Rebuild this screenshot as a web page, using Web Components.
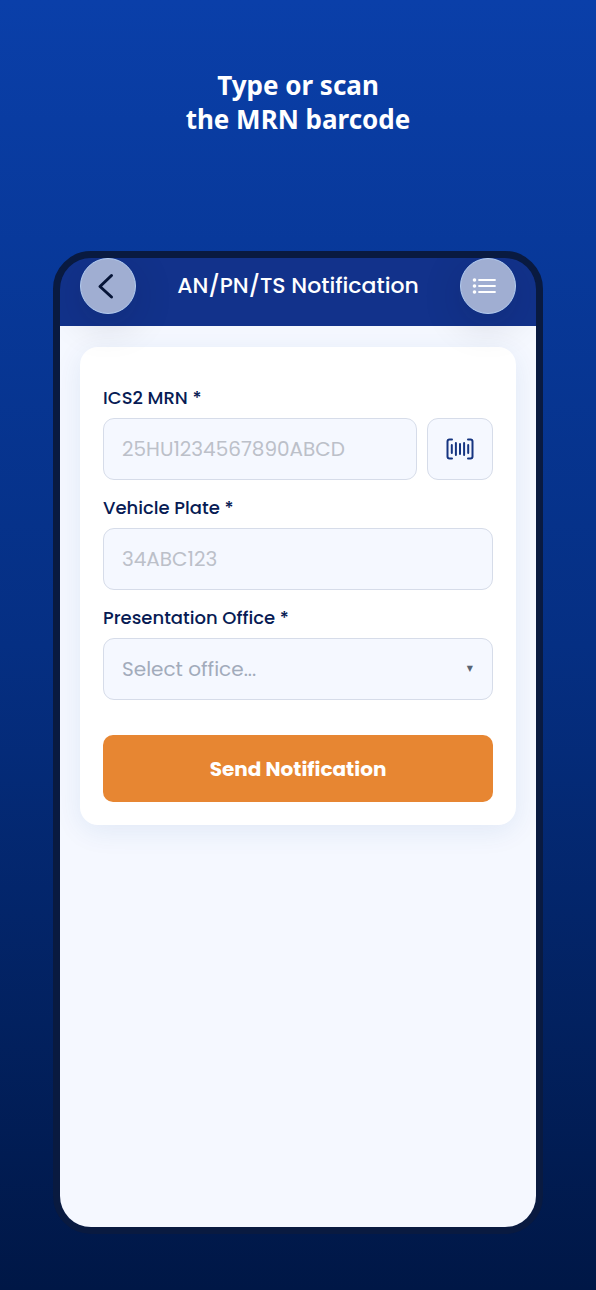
<!DOCTYPE html>
<html lang="en">
<head>
<meta charset="utf-8">
<meta name="viewport" content="width=device-width, initial-scale=1">
<title>AN/PN/TS Notification</title>
<style>
  body{
    margin:0;
    font-family:Poppins, Inter, "Liberation Sans", sans-serif;
    color:#071b54;
  }
</style>
</head>
<body>
  <promo-page>
    <span slot="title">Type or scan<br>the MRN barcode</span>
    <phone-frame>
      <app-header slot="header">
        <round-button slot="start" label="Back">
          <svg width="56" height="56" viewBox="0 0 56 56" fill="none" stroke="#061436" stroke-width="3" stroke-linecap="round" stroke-linejoin="round"><path d="M31.500 17.500 20 28.500 31.500 39"/></svg>
        </round-button>
        AN/PN/TS Notification
        <round-button slot="end" label="Menu">
          <svg width="56" height="56" viewBox="0 0 56 56" fill="none" stroke="#fff" stroke-width="1.800" stroke-linecap="round"><path d="M19 22H35M19 28H35M19 34H35"/><g fill="#fff" stroke="none"><circle cx="14.500" cy="22" r="1.800"/><circle cx="14.500" cy="28" r="1.800"/><circle cx="14.500" cy="34" r="1.800"/></g></svg>
        </round-button>
      </app-header>
      <form-card>
        <text-field label="ICS2 MRN *" placeholder="25HU1234567890ABCD">
          <scan-button></scan-button>
        </text-field>
        <text-field label="Vehicle Plate *" placeholder="34ABC123"></text-field>
        <select-field label="Presentation Office *" placeholder="Select office..."></select-field>
        <submit-button slot="action">Send Notification</submit-button>
      </form-card>
    </phone-frame>
  </promo-page>

<script>
class baseElement extends HTMLElement{
  constructor(){
    super()
    const template = document.createElement('template')
    template.innerHTML = this.markup
    this.attachShadow({mode: 'open'})
    this.shadowRoot.appendChild(template.content.cloneNode(true))
  }
}

// shared by the text field and the select field
const fieldStyle = `
  :host{
    display:block;
  }
  label{
    display:block;
    margin-bottom:10px;
    font-size:18px;
    line-height:20px;
    font-weight:500;
  }
  .row{
    display:flex;
    gap:10px;
  }
  input, select{
    box-sizing:border-box;
    flex:1;
    min-width:0;
    width:100%;
    height:62px;
    margin:0;
    padding:0 18px;
    border:1px solid #d6dce9;
    border-radius:11px;
    background:#f5f8ff;
    color:#071b54;
    font:inherit;
    font-size:20px;
  }`

class promoPage extends baseElement{
  get markup(){
    return `<style>
        :host{
          box-sizing:border-box;
          display:flex;
          flex-direction:column;
          gap:115px;
          min-height:100vh;
          padding:68px 53px 56px;
          background:linear-gradient(#0a3fa9, #052f83 50%, #001746);
        }
        h1{
          margin:0;
          color:#fff;
          font:700 26px/34px "Noto Sans", "Open Sans", sans-serif;
          text-align:center;
        }
        ::slotted(phone-frame){
          flex-grow:1;
        }
      </style>
      <h1><slot name="title"></slot></h1>
      <slot></slot>`
  }
}

class phoneFrame extends baseElement{
  get markup(){
    return `<style>
        :host{
          display:flex;
          flex-direction:column;
          border:7px solid #091a40;
          border-radius:38px;
          background:#091a40;
          overflow:hidden;
        }
        main{
          flex-grow:1;
          padding:21px 20px;
          background:#f5f8ff;
        }
      </style>
      <slot name="header"></slot>
      <main><slot></slot></main>`
  }
}

class appHeader extends baseElement{
  get markup(){
    return `<style>
        :host{
          position:relative;
          z-index:1;
          display:block;
          background:#12328b;
        }
        header{
          display:flex;
          align-items:center;
          justify-content:space-between;
          padding:0 20px 12px;
        }
        h2{
          margin:0;
          color:#fff;
          font-size:22px;
          line-height:32px;
          font-weight:500;
          white-space:nowrap;
        }
      </style>
      <header>
        <slot name="start"></slot>
        <h2><slot></slot></h2>
        <slot name="end"></slot>
      </header>`
  }
}

class roundButton extends baseElement{
  get markup(){
    return `<style>
        :host{
          display:block;
        }
        button{
          box-sizing:border-box;
          display:grid;
          place-content:center;
          width:56px;
          height:56px;
          padding:0;
          border:1px solid #b4cdf0;
          border-radius:50%;
          background:#a0aed2;
          box-shadow:0 10px 40px rgba(20, 20, 40, .16);
        }
      </style>
      <button type="button"><slot></slot></button>`
  }
  connectedCallback(){
    this.shadowRoot.querySelector('button').setAttribute('aria-label', this.getAttribute('label'))
  }
}

class formCard extends baseElement{
  get markup(){
    return `<style>
        :host{
          display:block;
          border-radius:18px;
          background:#fff;
          box-shadow:0 6px 28px rgba(20, 80, 150, .09);
        }
        form{
          display:flex;
          flex-direction:column;
          gap:18px;
          padding:41px 23px 23px;
        }
        .action{
          padding-top:17px;
        }
      </style>
      <form>
        <slot></slot>
        <div class="action"><slot name="action"></slot></div>
      </form>`
  }
}

class textField extends baseElement{
  get markup(){
    return `<style>
        ${fieldStyle}
        input::placeholder{
          color:#bcc0c9;
          opacity:1;
        }
      </style>
      <label for="field"></label>
      <div class="row">
        <input id="field" type="text">
        <slot></slot>
      </div>`
  }
  connectedCallback(){
    this.shadowRoot.querySelector('label').textContent = this.getAttribute('label')
    this.shadowRoot.querySelector('input').placeholder = this.getAttribute('placeholder')
  }
}

class selectField extends baseElement{
  get markup(){
    return `<style>
        ${fieldStyle}
        .row{
          display:grid;
          align-items:center;
        }
        select, .arrow{
          grid-area:1 / 1;
        }
        select{
          appearance:none;
          color:#a2abbb;
        }
        .arrow{
          justify-self:end;
          margin-right:20px;
          color:#586474;
          font:8px/8px "DejaVu Sans", sans-serif;
          pointer-events:none;
        }
      </style>
      <label for="field"></label>
      <div class="row">
        <select id="field"><option value=""></option></select>
        <span class="arrow" aria-hidden="true">▼</span>
      </div>`
  }
  connectedCallback(){
    this.shadowRoot.querySelector('label').textContent = this.getAttribute('label')
    this.shadowRoot.querySelector('option').textContent = this.getAttribute('placeholder')
  }
}

class scanButton extends baseElement{
  get markup(){
    return `<style>
        :host{
          display:block;
        }
        button{
          box-sizing:border-box;
          display:grid;
          place-content:center;
          width:66px;
          height:62px;
          padding:0;
          border:1px solid #d6dce9;
          border-radius:11px;
          background:#f5f8ff;
        }
      </style>
      <button type="button" aria-label="Scan barcode">
        <svg width="28" height="22" viewBox="0 0 28 22" fill="none" stroke="#163581" stroke-width="2" stroke-linecap="round" stroke-linejoin="round">
          <path d="M6 1.500H3.500Q1.500 1.500 1.500 3.500V18.500Q1.500 20.500 3.500 20.500H6M22 1.500H24.500Q26.500 1.500 26.500 3.500V18.500Q26.500 20.500 24.500 20.500H22"/>
          <path d="M5.800 7V15M9.900 5V17M14 6V16M18.100 5V17M22.200 7V15"/>
        </svg>
      </button>`
  }
}

class submitButton extends baseElement{
  get markup(){
    return `<style>
        :host{
          display:block;
        }
        button{
          display:block;
          width:100%;
          height:67px;
          padding:0;
          border:0;
          border-radius:10px;
          background:#e78632;
          color:#fff;
          font:inherit;
          font-size:20px;
          font-weight:700;
        }
      </style>
      <button type="button"><slot></slot></button>`
  }
}

window.customElements.define('promo-page', promoPage)
window.customElements.define('phone-frame', phoneFrame)
window.customElements.define('app-header', appHeader)
window.customElements.define('round-button', roundButton)
window.customElements.define('form-card', formCard)
window.customElements.define('text-field', textField)
window.customElements.define('select-field', selectField)
window.customElements.define('scan-button', scanButton)
window.customElements.define('submit-button', submitButton)
</script>
</body>
</html>
